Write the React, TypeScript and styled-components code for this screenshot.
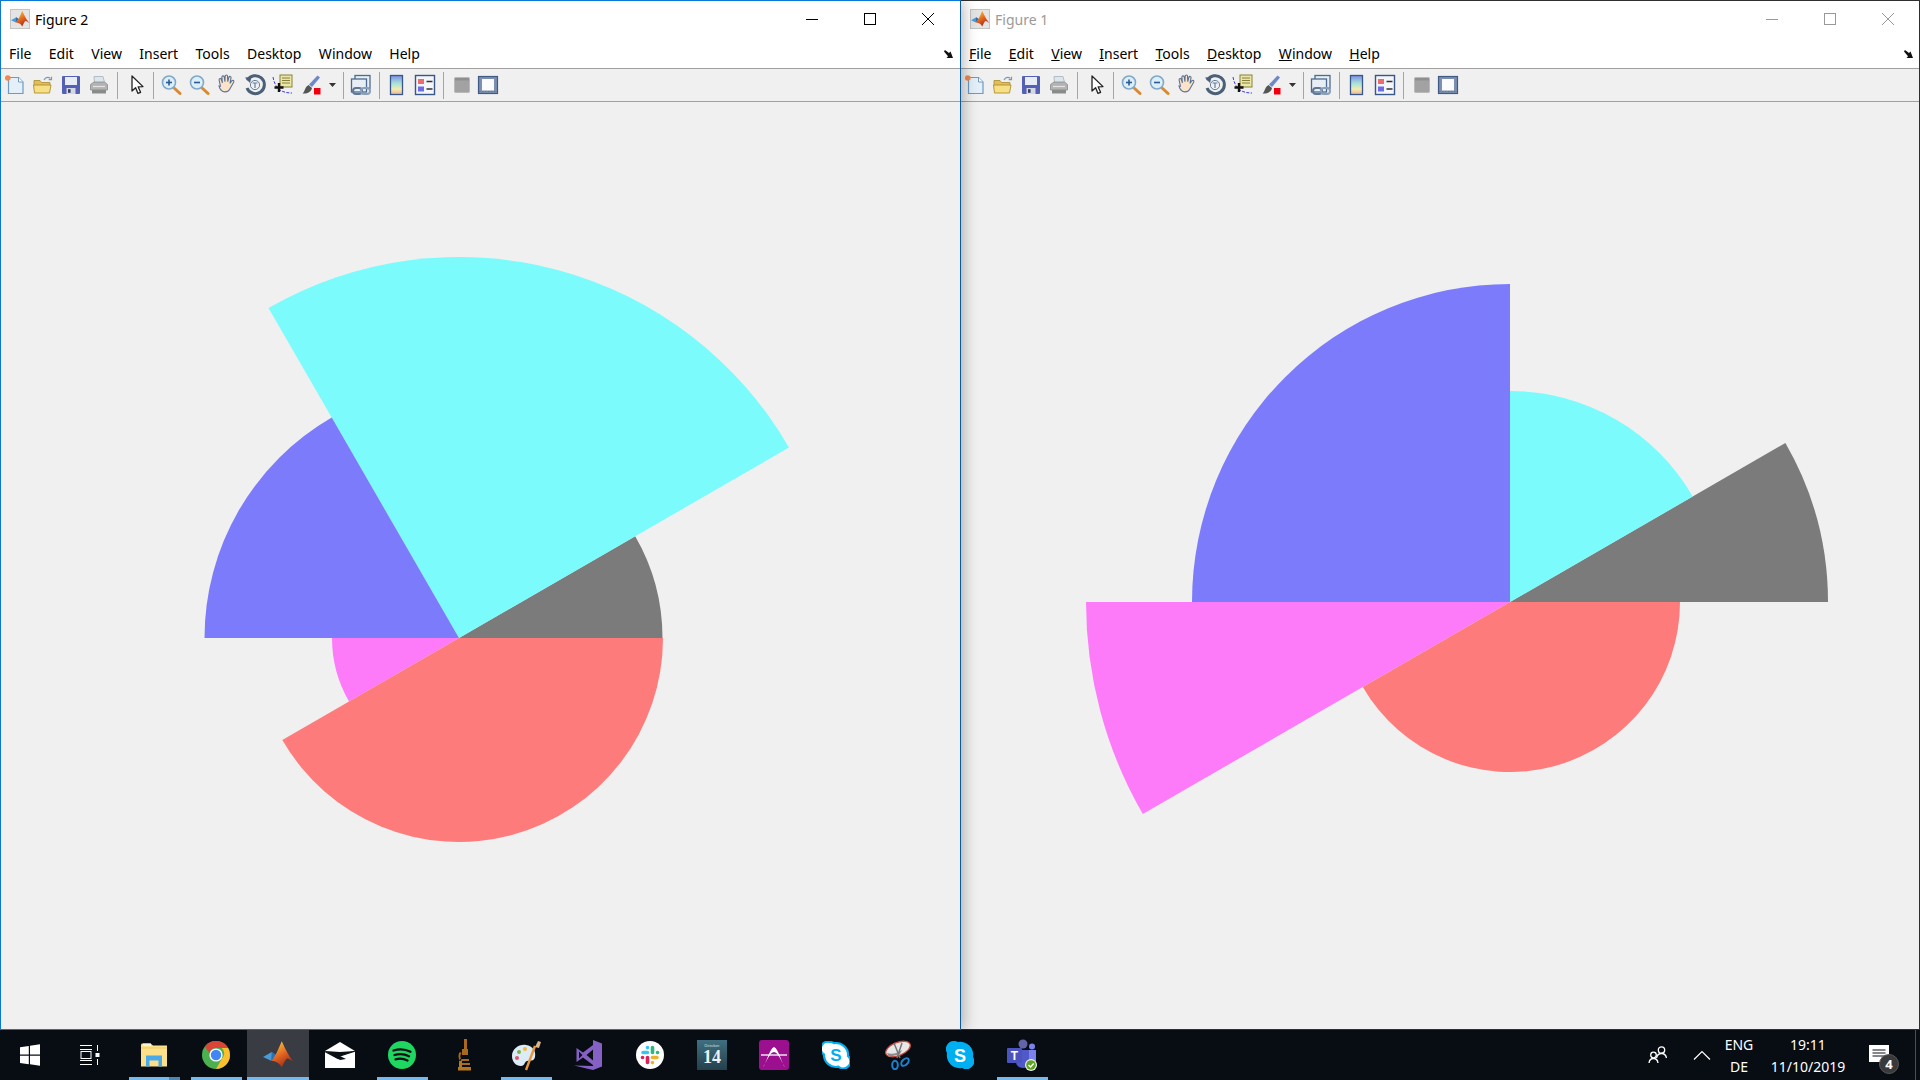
import React from "react";
import styled, { createGlobalStyle } from "styled-components";

type Wedge = { from: number; to: number; r: number; color: string };

const CYAN = "#7bfbfb";
const BLUE = "#7b7bfb";
const GRAY = "#7b7b7b";
const MAGENTA = "#fd7bf9";
const RED = "#fd7b7b";

const figure2: Wedge[] = [
  { from: 0, to: 30, r: 203.5, color: GRAY },
  { from: 30, to: 120, r: 381, color: CYAN },
  { from: 120, to: 180, r: 254.5, color: BLUE },
  { from: 180, to: 210, r: 127, color: MAGENTA },
  { from: 210, to: 360, r: 204, color: RED },
];

const figure1: Wedge[] = [
  { from: 0, to: 30, r: 318, color: GRAY },
  { from: 30, to: 90, r: 211, color: CYAN },
  { from: 90, to: 180, r: 318, color: BLUE },
  { from: 180, to: 210, r: 424, color: MAGENTA },
  { from: 210, to: 360, r: 170, color: RED },
];

const MENU = ["File", "Edit", "View", "Insert", "Tools", "Desktop", "Window", "Help"];

function wedgePath(cx: number, cy: number, w: Wedge) {
  const rad = (a: number) => (a * Math.PI) / 180;
  const x1 = cx + w.r * Math.cos(rad(w.from));
  const y1 = cy - w.r * Math.sin(rad(w.from));
  const x2 = cx + w.r * Math.cos(rad(w.to));
  const y2 = cy - w.r * Math.sin(rad(w.to));
  const large = w.to - w.from > 180 ? 1 : 0;
  return `M${cx} ${cy}L${x1} ${y1}A${w.r} ${w.r} 0 ${large} 0 ${x2} ${y2}Z`;
}

function MatlabLogo({ size }: { size: number }) {
  return (
    <svg width={size} height={size} viewBox="0 0 24 24">
      <defs>
        <linearGradient id="mlPeak" x1="0.3" y1="0" x2="0.8" y2="1">
          <stop offset="0" stopColor="#f9c23c" />
          <stop offset="0.5" stopColor="#e0611f" />
          <stop offset="1" stopColor="#8e1f16" />
        </linearGradient>
      </defs>
      <path d="M0 13.500 7 9.500l3.500 2.700L6.500 16.500z" fill="#4a9ad8" />
      <path d="M7 9.500 10.500 12.200 13.400 8 6.500 16.500z" fill="#2a6fb0" />
      <path d="M15 1c1.800 3.600 4.600 10.500 9 16-2-.9-3.400-2.400-4.600-2.200-1.200.3-2.400 3.200-4.400 7.200-1.400-3-3.600-5-8.500-5.500C9.500 14.500 12.200 7.500 15 1z" fill="url(#mlPeak)" />
    </svg>
  );
}

function NewIcon() {
  return (
    <svg width="22" height="22" viewBox="0 0 22 22">
      <path d="M4.500 3.500h10l4.500 4.500v11.500H4.500z" fill="#e3f0fa" stroke="#6f9ac2" strokeWidth="1.200" />
      <path d="M14.500 3.500V8H19" fill="#fff" stroke="#6f9ac2" />
      <circle cx="3.800" cy="4" r="2.800" fill="#ee8a4e" />
    </svg>
  );
}

function OpenIcon() {
  return (
    <svg width="22" height="22" viewBox="0 0 22 22">
      <path d="M2 6.500h6l1.500 2H18v3H2z" fill="#e2bf56" stroke="#a88a2f" strokeWidth="0.800" />
      <path d="M1.500 11h17.500l-1.500 8H2.500z" fill="#f7df87" stroke="#ae8f30" strokeWidth="0.900" />
      <path d="M12 6c1.400-2.600 4-3 6.400-1.800M19.500 2.800v2.800h-2.800" fill="none" stroke="#7b96ad" strokeWidth="1.200" />
    </svg>
  );
}

function SaveIcon() {
  return (
    <svg width="22" height="22" viewBox="0 0 22 22">
      <rect x="2" y="2" width="18" height="18" rx="1" fill="#5360b4" />
      <rect x="5" y="3" width="12" height="8" fill="#e7ecf7" />
      <rect x="6.500" y="14" width="9" height="6" fill="#d4d8e6" />
      <rect x="8" y="15.200" width="2.600" height="3.600" fill="#3a3f66" />
    </svg>
  );
}

function PrintIcon() {
  return (
    <svg width="22" height="22" viewBox="0 0 22 22">
      <path d="M6 2.500h9l1.500 6h-10z" fill="#dce6ee" stroke="#a6b0b8" strokeWidth="0.800" />
      <path d="M2.500 10.500 6 8h10.500l3 2.500v5.500h-17z" fill="#b2b4b4" stroke="#8a8c8c" strokeWidth="0.800" />
      <path d="M4 16h14v3.500H4z" fill="#8a8c8c" />
      <path d="M5 12.500h12" stroke="#e4e4e4" strokeWidth="1.200" />
    </svg>
  );
}

function ArrowIcon() {
  return (
    <svg width="22" height="22" viewBox="0 0 22 22">
      <path d="M6 2v15l3.600-3.200 2.400 5.600 2.600-1.100-2.400-5.400 4.800-.3z" fill="#fff" stroke="#222" strokeWidth="1.300" strokeLinejoin="round" />
    </svg>
  );
}

function ZoomIcon({ plus }: { plus: boolean }) {
  return (
    <svg width="22" height="22" viewBox="0 0 22 22">
      <path d="M13 13l7 6.500" stroke="#d98a2e" strokeWidth="3" strokeLinecap="round" />
      <circle cx="9" cy="8.500" r="6.500" fill="#dbeefa" stroke="#7fa9c9" strokeWidth="1.600" />
      <path d="M6 8.500h6" stroke="#2d5a93" strokeWidth="1.600" />
      {plus && <path d="M9 5.500v6" stroke="#2d5a93" strokeWidth="1.600" />}
    </svg>
  );
}

function HandIcon() {
  return (
    <svg width="24" height="24" viewBox="0 0 22 22">
      <path d="M5 12 3.800 6.500c-.3-1.600 1.600-2 2-.5l1 3-.5-5c-.2-1.700 2-1.800 2.200-.2l.6 4.200.2-5c0-1.600 2.200-1.500 2.200 0l.2 5 1-4c.4-1.500 2.300-1 2 .5l-1 5 1.600-2.200c1-1.200 2.600-.2 1.800 1.100l-3 5.300c-.8 2-2 3.600-5 3.600-3.400 0-4.600-2-5.500-5.400z" fill="#fbe3cb" stroke="#5d7390" strokeWidth="1" />
    </svg>
  );
}

function RotateIcon() {
  return (
    <svg width="22" height="22" viewBox="0 0 22 22">
      <path d="M3.400 6.500A9 9 0 1 1 3 14" fill="none" stroke="#4b5f78" strokeWidth="3" />
      <path d="M1 3.500 7.500 3 6 9z" fill="#4b5f78" />
      <circle cx="11" cy="11" r="4.600" fill="#eef2f6" stroke="#6a7f98" />
      <path d="M8.500 9h5M11 9v5" stroke="#6a7f98" strokeWidth="1.200" />
    </svg>
  );
}

function DataTipIcon() {
  return (
    <svg width="22" height="22" viewBox="0 0 22 22">
      <path d="M1 3c.8 5 3 10 7 13 3 2 7 3 12 3" fill="none" stroke="#3a3ae0" strokeWidth="1" strokeDasharray="3 1.400" />
      <rect x="8" y="1" width="12" height="12" fill="#ece7a8" stroke="#85803c" />
      <path d="M10 4h8M10 6.500h8M10 9h8" stroke="#85803c" />
      <path d="M7 9v9M2.500 13.500h9" stroke="#111" strokeWidth="2.400" />
    </svg>
  );
}

function BrushIcon() {
  return (
    <svg width="22" height="22" viewBox="0 0 22 22">
      <path d="M17.500 1.500 20 3.500 12 13l-3-2.500z" fill="#6f86c8" />
      <path d="M8.500 11 12 14c-.6 3.500-4.500 6-9.500 5.500C5 18 4.500 13 8.500 11z" fill="#555" />
      <rect x="14" y="14" width="6.500" height="6.500" fill="#f0000f" />
    </svg>
  );
}

function Caret() {
  return (
    <svg width="8" height="5" viewBox="0 0 8 5">
      <path d="M0 0h7L3.500 4z" fill="#333" />
    </svg>
  );
}

function LinkIcon() {
  return (
    <svg width="22" height="22" viewBox="0 0 22 22">
      <rect x="5" y="1.500" width="15" height="13" fill="#e7eef5" stroke="#4d6a90" strokeWidth="1.300" />
      <rect x="1.500" y="5" width="15" height="13" fill="#e7eef5" stroke="#4d6a90" strokeWidth="1.300" />
      <rect x="3" y="14" width="9" height="6" rx="3" fill="none" stroke="#5f7896" strokeWidth="2" />
      <rect x="11" y="14" width="9" height="6" rx="3" fill="none" stroke="#8aa0b8" strokeWidth="2" />
    </svg>
  );
}

function ColorbarIcon() {
  return (
    <svg width="22" height="22" viewBox="0 0 22 22">
      <defs>
        <linearGradient id="cbar" x1="0" y1="0" x2="0" y2="1">
          <stop offset="0" stopColor="#7f8ce4" />
          <stop offset="0.4" stopColor="#a4e0dc" />
          <stop offset="0.72" stopColor="#f2ecae" />
          <stop offset="1" stopColor="#f2b09c" />
        </linearGradient>
      </defs>
      <rect x="4.500" y="1.500" width="12" height="19" fill="url(#cbar)" stroke="#37568a" strokeWidth="1.300" />
    </svg>
  );
}

function LegendIcon() {
  return (
    <svg width="22" height="22" viewBox="0 0 22 22">
      <rect x="1.500" y="1.500" width="19" height="19" fill="#f4f6fa" stroke="#37568a" strokeWidth="1.400" />
      <rect x="4" y="5" width="6" height="5" fill="#ec6b6f" />
      <rect x="4" y="12.500" width="6" height="5" fill="#6c6ce8" />
      <path d="M12.500 7.500h6M12.500 15h6" stroke="#333" strokeWidth="1.300" />
    </svg>
  );
}

function GrayPanelIcon() {
  return (
    <svg width="22" height="22" viewBox="0 0 22 22">
      <rect x="3.500" y="3.500" width="15" height="15" rx="1" fill="#a2a2a2" stroke="#b9b9b9" />
      <rect x="4" y="4" width="14" height="2.500" fill="#8f8f8f" />
    </svg>
  );
}

function PlotToolsIcon() {
  return (
    <svg width="22" height="22" viewBox="0 0 22 22">
      <rect x="1.500" y="2.500" width="19" height="17" fill="#7c8fae" stroke="#3f5a86" strokeWidth="1.200" />
      <rect x="5" y="5" width="12" height="11.500" fill="#fbfbfb" />
      <path d="M2 17.500h18" stroke="#5f769a" strokeWidth="1.200" strokeDasharray="1.500 1.500" />
    </svg>
  );
}

function FigureWindow({
  title,
  active,
  wedges,
  cx,
  cy,
}: {
  title: string;
  active: boolean;
  wedges: Wedge[];
  cx: number;
  cy: number;
}) {
  return (
    <Window $active={active}>
      <TitleBar>
        <TitleIcon>
          <MatlabLogo size={18} />
        </TitleIcon>
        <TitleText $active={active}>{title}</TitleText>
        <Controls $active={active}>
          <ControlButton>
            <svg width="14" height="14" viewBox="0 0 14 14">
              <path d="M1 7.500h12" stroke="currentColor" />
            </svg>
          </ControlButton>
          <ControlButton>
            <svg width="14" height="14" viewBox="0 0 14 14">
              <rect x="1.500" y="1.500" width="11" height="11" fill="none" stroke="currentColor" />
            </svg>
          </ControlButton>
          <ControlButton>
            <svg width="14" height="14" viewBox="0 0 14 14">
              <path d="M1 1l12 12M13 1 1 13" stroke="currentColor" />
            </svg>
          </ControlButton>
        </Controls>
      </TitleBar>
      <MenuBar>
        {MENU.map((m) => (
          <MenuItem key={m}>
            <Accel $on={!active}>{m[0]}</Accel>
            {m.slice(1)}
          </MenuItem>
        ))}
        <Undock>
          <svg width="9" height="8" viewBox="0 0 9 8">
            <path d="M0 1.500 1 0l4 3 1.500-1.500L9 8H2.500L4 6.300z" fill="#111" />
          </svg>
        </Undock>
      </MenuBar>
      <Toolbar>
        <ToolButton><NewIcon /></ToolButton>
        <ToolButton><OpenIcon /></ToolButton>
        <ToolButton><SaveIcon /></ToolButton>
        <ToolButton><PrintIcon /></ToolButton>
        <Separator $before={4} $after={5} />
        <ToolButton><ArrowIcon /></ToolButton>
        <Separator $before={2} $after={3} />
        <ToolButton><ZoomIcon plus /></ToolButton>
        <ToolButton><ZoomIcon plus={false} /></ToolButton>
        <ToolButton><HandIcon /></ToolButton>
        <ToolButton><RotateIcon /></ToolButton>
        <ToolButton><DataTipIcon /></ToolButton>
        <ToolButton><BrushIcon /></ToolButton>
        <ToolButton $w={16}><Caret /></ToolButton>
        <Separator $before={2} $after={3} />
        <ToolButton><LinkIcon /></ToolButton>
        <Separator $before={4} $after={3} />
        <ToolButton><ColorbarIcon /></ToolButton>
        <ToolButton><LegendIcon /></ToolButton>
        <Separator $before={4} $after={4} />
        <ToolButton><GrayPanelIcon /></ToolButton>
        <ToolButton $w={24}><PlotToolsIcon /></ToolButton>
      </Toolbar>
      <Canvas>
        <PlotSvg>
          {wedges.map((w) => (
            <path key={w.from} d={wedgePath(cx, cy, w)} fill={w.color} />
          ))}
        </PlotSvg>
      </Canvas>
    </Window>
  );
}

function TaskIcon({ children, state }: { children: React.ReactNode; state?: "open" | "stack" | "focus" }) {
  return (
    <TaskItem $focus={state === "focus"}>
      {children}
      {state && <RunBar $focus={state === "focus"} $stack={state === "stack"} />}
    </TaskItem>
  );
}

function App() {
  return (
    <>
      <GlobalStyle />
      <Desktop>
        <Windows>
          <FigureWindow title="Figure 2" active wedges={figure2} cx={459} cy={536} />
          <FigureWindow title="Figure 1" active={false} wedges={figure1} cx={550} cy={500} />
        </Windows>
        <Taskbar>
          <StartButton>
            <svg width="20" height="22" viewBox="0 0 20 22">
              <path d="M0 3.300 8.800 2v8.500H0zM10 1.800 20 .3v10.200H10zM0 11.700h8.800v8.500L0 19zM10 11.700h10v10L10 20.300z" fill="#fff" />
            </svg>
          </StartButton>
          <TaskViewButton>
            <svg width="20" height="20" viewBox="0 0 20 20">
              <path d="M0 .5h12M0 19.500h12" stroke="#fff" />
              <path d="M0 4.500h12M0 15.500h12" stroke="#fff" />
              <rect x="1" y="6.500" width="10" height="7" fill="none" stroke="#fff" />
              <path d="M17.500 0v6M17.500 14v6" stroke="#fff" />
              <rect x="15.500" y="8" width="4" height="4" fill="#fff" />
            </svg>
          </TaskViewButton>
          <TaskIcon state="stack">
            <svg width="28" height="26" viewBox="0 0 28 26">
              <path d="M1 3c0-1 .6-1.600 1.500-1.600h8L13 3.500h14v21H1z" fill="#fde08a" />
              <rect x="3" y="1.500" width="8" height="2.500" fill="#f7f3dc" />
              <path d="M1 6h26" stroke="#eec95e" />
              <path d="M6 24.500V13.500h16v11h-3.500v-6H9.500v6z" fill="#4aa9e8" />
            </svg>
          </TaskIcon>
          <TaskIcon state="open">
            <svg width="28" height="28" viewBox="0 0 28 28">
              <circle cx="14" cy="14" r="14" fill="#4caf50" />
              <path d="M14 0a14 14 0 0 1 12.100 7H14a7 7 0 0 0-6.700 5L2.800 5.600A14 14 0 0 1 14 0z" fill="#db4437" />
              <path d="M26.100 7A14 14 0 0 1 14 28l6-10.500A7 7 0 0 0 19.800 7z" fill="#fbc02d" />
              <circle cx="14" cy="14" r="6.600" fill="#fff" />
              <circle cx="14" cy="14" r="5.200" fill="#4285f4" />
            </svg>
          </TaskIcon>
          <TaskIcon state="focus">
            <MatlabLogo size={30} />
          </TaskIcon>
          <TaskIcon>
            <svg width="30" height="26" viewBox="0 0 30 26">
              <path d="M0 9 15 0l15 9v17H0z" fill="#fff" />
              <path d="M0 9 15 18l6-1-6-3 15-5-15 1z" fill="#0a0f14" />
              <path d="M0 9.500 13 16.500 15 14 30 9" fill="none" stroke="#0a0f14" strokeWidth="1.200" />
            </svg>
          </TaskIcon>
          <TaskIcon state="open">
            <svg width="28" height="28" viewBox="0 0 28 28">
              <circle cx="14" cy="14" r="14" fill="#1ed760" />
              <path d="M5.500 9.500c6-1.800 12-1.300 17 1.300M6.500 14c5-1.400 10-1 14.500 1.300M7.500 18.300c4-1 8-.8 12 1.200" fill="none" stroke="#0a0f14" strokeWidth="2.300" strokeLinecap="round" />
            </svg>
          </TaskIcon>
          <TaskIcon>
            <svg width="16" height="32" viewBox="0 0 16 32">
              <path d="M8 0h3v11H8zM6 10h6v6H6z" fill="#a86a1a" />
              <path d="M4 13c-2 2-2 6 0 9l1.500-1c-1.500-2.500-1.500-5 0-7zM4 20h9v2H4zM6 24h8v2H6z" fill="#a86a1a" />
              <path d="M3 22h3v6H3zM2 28h13v3.500H2z" fill="#b5741e" />
            </svg>
          </TaskIcon>
          <TaskIcon state="open">
            <svg width="30" height="32" viewBox="0 0 30 32">
              <path d="M1 17c0-7 7-12 14-11 7 1 10 6 9 12-1 5-5 3-8 4-3 1-2 5-6 5-5 0-9-4-9-10z" fill="#dcecf6" />
              <circle cx="6" cy="19" r="2" fill="#e0566a" />
              <circle cx="8" cy="13" r="2" fill="#7cb342" />
              <circle cx="14" cy="10" r="2" fill="#f4b63f" />
              <path d="M15 31 24 7" stroke="#e8973e" strokeWidth="2.400" />
              <path d="M24 8l3-6 3 1-2 6z" fill="#d8b48a" />
            </svg>
          </TaskIcon>
          <TaskIcon>
            <svg width="30" height="32" viewBox="0 0 30 32">
              <path d="M20 1 29 4.500v23L20 31 1 26.500 20 27z" fill="#8661c5" />
              <path d="M20 6v20L10 18.500 3.500 23V9l6.500 4.500z" fill="#8661c5" />
              <path d="M20 10.500 13.500 16 20 21.500zM6 12.500v7l3.500-3.500z" fill="#0a0f14" />
            </svg>
          </TaskIcon>
          <TaskIcon>
            <svg width="28" height="28" viewBox="0 0 28 28">
              <circle cx="14" cy="14" r="14" fill="#fff" />
              <g fill="none" strokeWidth="3.600" strokeLinecap="round">
                <path d="M7 11.500h4.500M11.500 6.500v.1" stroke="#36c5f0" />
                <path d="M16.500 6.500v5M21.500 11.500h.1" stroke="#2eb67d" />
                <path d="M16.500 16.500h4.500M16.500 21.500v.1" stroke="#ecb22e" />
                <path d="M11.500 16.500v5M6.500 16.500h.1" stroke="#e01e5a" />
              </g>
            </svg>
          </TaskIcon>
          <TaskIcon>
            <CalendarTile>
              <CalendarStrip>October</CalendarStrip>
              <CalendarDay>14</CalendarDay>
            </CalendarTile>
          </TaskIcon>
          <TaskIcon>
            <svg width="30" height="30" viewBox="0 0 30 30">
              <rect width="30" height="30" rx="3" fill="#9c0f8f" />
              <path d="M4 27c3-2 6-18 11-20 5 2 8 18 11 20-4-6-7-15-11-15S8 21 4 27z" fill="#fff" />
              <path d="M2 15h26" stroke="#fff" strokeWidth="1.300" />
            </svg>
          </TaskIcon>
          <TaskIcon>
            <svg width="28" height="28" viewBox="0 0 28 28">
              <path d="M8 1a7 7 0 0 1 4 1.200 12 12 0 0 1 14 12.800 7 7 0 0 1-9.500 10.700A12 12 0 0 1 2 13.500 7 7 0 0 1 8 1z" fill="#fff" stroke="#00aff0" strokeWidth="2.200" />
              <text x="14" y="20" textAnchor="middle" fontFamily="Liberation Sans, sans-serif" fontSize="17" fontWeight="700" fill="#00aff0">S</text>
            </svg>
          </TaskIcon>
          <TaskIcon>
            <svg width="28" height="30" viewBox="0 0 28 30">
              <ellipse cx="14" cy="9" rx="13" ry="6.500" transform="rotate(-22 14 9)" fill="#e8e8e8" stroke="#c9483e" strokeWidth="1.300" />
              <path d="M3 13c5 2 11 0 15-3l-2 4-11 3z" fill="#8d8d8d" />
              <path d="M10 3l6 15M18 3l-5 15" stroke="#777" strokeWidth="1.500" />
              <ellipse cx="11" cy="25" rx="2.800" ry="4.200" fill="none" stroke="#1a82cf" strokeWidth="2" />
              <ellipse cx="21" cy="22" rx="2.800" ry="4.500" transform="rotate(45 21 22)" fill="none" stroke="#1a82cf" strokeWidth="2" />
            </svg>
          </TaskIcon>
          <TaskIcon>
            <svg width="28" height="28" viewBox="0 0 28 28">
              <path d="M8 0a8 8 0 0 1 4 1 13 13 0 0 1 15 15 8 8 0 0 1-11 11A13 13 0 0 1 1 12 8 8 0 0 1 8 0z" fill="#00aff0" />
              <text x="14" y="20.500" textAnchor="middle" fontFamily="Liberation Sans, sans-serif" fontSize="18" fontWeight="700" fill="#fff">S</text>
            </svg>
          </TaskIcon>
          <TaskIcon state="open">
            <svg width="32" height="32" viewBox="0 0 32 32">
              <circle cx="17" cy="5" r="4.500" fill="#6264a7" />
              <circle cx="26" cy="7.500" r="3" fill="#7b83eb" />
              <path d="M20 11h10v10c0 3-3 5-6 5s-4-2-4-4z" fill="#7b83eb" />
              <path d="M10 11h13v13c0 3-2 5-6 5s-7-3-7-6z" fill="#5059c9" />
              <rect x="1" y="9" width="15" height="15" rx="1" fill="#4b53bc" />
              <text x="8.500" y="21" textAnchor="middle" fontFamily="Liberation Sans, sans-serif" fontSize="12" fontWeight="700" fill="#fff">T</text>
              <circle cx="25" cy="26" r="6" fill="#f2f2f2" />
              <circle cx="25" cy="26" r="4.800" fill="#5da423" />
              <path d="M22.500 26l2 2 3.200-3.500" fill="none" stroke="#fff" strokeWidth="1.400" />
            </svg>
          </TaskIcon>
          <Tray>
            <TrayIcon $w={44}>
              <svg width="20" height="20" viewBox="0 0 20 20">
                <circle cx="13.500" cy="5" r="3.200" fill="none" stroke="#fff" strokeWidth="1.300" />
                <path d="M8.500 13c.6-3 2.500-4.500 5-4.500s4.400 1.500 5 4.500" fill="none" stroke="#fff" strokeWidth="1.300" />
                <circle cx="5.500" cy="10" r="2.800" fill="#0a0f14" stroke="#fff" strokeWidth="1.300" />
                <path d="M1 18c.4-3 2-4.500 4.500-4.500S9.600 15 10 18" fill="none" stroke="#fff" strokeWidth="1.300" />
              </svg>
            </TrayIcon>
            <TrayIcon $w={44}>
              <svg width="18" height="10" viewBox="0 0 18 10">
                <path d="M1 9.500 9 1.500l8 8" fill="none" stroke="#fff" strokeWidth="1.200" />
              </svg>
            </TrayIcon>
            <TrayText $w={30}>
              <span>ENG</span>
              <span>DE</span>
            </TrayText>
            <TrayText $w={86} $left={11}>
              <span>19:11</span>
              <span>11/10/2019</span>
            </TrayText>
            <Notification>
              <svg width="20" height="18" viewBox="0 0 20 18">
                <path d="M0 0h20v17H0z" fill="#fff" />
                <path d="M3.500 5h13M3.500 8h13M3.500 11h13" stroke="#0a0f14" strokeWidth="1.100" />
              </svg>
              <Badge>4</Badge>
            </Notification>
            <ShowDesktop />
          </Tray>
        </Taskbar>
      </Desktop>
    </>
  );
}

const GlobalStyle = createGlobalStyle`
  html, body {
    margin: 0;
    padding: 0;
    height: 100%;
    overflow: hidden;
    font-family: "Noto Sans", "Open Sans", sans-serif;
  }
  #root {
    height: 100%;
  }
`;

const Desktop = styled.div`
  display: flex;
  flex-direction: column;
  width: 1920px;
  height: 1080px;
`;

const Windows = styled.div`
  display: flex;
  height: 1030px;
`;

const Window = styled.section<{ $active: boolean }>`
  position: relative;
  z-index: ${(p) => (p.$active ? 1 : 0)};
  display: flex;
  flex-direction: column;
  flex: 0 0 ${(p) => (p.$active ? 961 : 960)}px;
  box-sizing: border-box;
  padding-right: ${(p) => (p.$active ? 1 : 0)}px;
  margin-right: ${(p) => (p.$active ? -1 : 0)}px;
  height: 100%;
  background: #fff;
  box-shadow: ${(p) => (p.$active ? "2px 0 14px rgba(0, 0, 0, 0.3)" : "none")};
  &::after {
    content: "";
    position: absolute;
    inset: 0;
    pointer-events: none;
    border-style: solid;
    border-color: ${(p) => (p.$active ? "#0a78d7" : "#2f2f2f")};
    border-width: ${(p) => (p.$active ? "1px" : "1px 1px 1px 0")};
    border-right-color: ${(p) => (p.$active ? "#0b5aa0" : "#2f2f2f")};
  }
`;

const TitleBar = styled.div`
  display: flex;
  align-items: center;
  height: 38px;
  padding: 0 3px 0 10px;
`;

const TitleIcon = styled.div`
  display: flex;
  align-items: center;
  justify-content: center;
  width: 20px;
  height: 20px;
  margin-right: 5px;
  background: #e4e4e4;
  border: 1px solid #c4c4c4;
  box-sizing: border-box;
`;

const TitleText = styled.span<{ $active: boolean }>`
  font-size: 14px;
  color: ${(p) => (p.$active ? "#000" : "#9a9a9a")};
`;

const Controls = styled.div<{ $active: boolean }>`
  display: flex;
  margin-left: auto;
  color: ${(p) => (p.$active ? "#000" : "#999")};
`;

const ControlButton = styled.div`
  display: flex;
  align-items: center;
  justify-content: center;
  width: 58px;
  height: 38px;
`;

const MenuBar = styled.nav`
  display: flex;
  align-items: center;
  gap: 17.400px;
  height: 31px;
  padding: 1px 7px 0 9px;
  box-sizing: border-box;
  border-bottom: 1px solid #a0a0a0;
  font-size: 14px;
  color: #000;
`;

const MenuItem = styled.span``;

const Accel = styled.span<{ $on: boolean }>`
  text-decoration: ${(p) => (p.$on ? "underline" : "none")};
`;

const Undock = styled.span`
  display: flex;
  margin-left: auto;
`;

const Toolbar = styled.div`
  display: flex;
  align-items: center;
  height: 33px;
  padding-left: 1px;
  box-sizing: border-box;
  background: #f0f0f0;
  border-bottom: 1px solid #a0a0a0;
`;

const ToolButton = styled.div<{ $w?: number }>`
  display: flex;
  align-items: center;
  justify-content: center;
  flex: 0 0 ${(p) => p.$w ?? 28}px;
  height: 24px;
`;

const Separator = styled.div<{ $before: number; $after: number }>`
  width: 1px;
  height: 27px;
  margin: 0 ${(p) => p.$after}px 0 ${(p) => p.$before}px;
  background: #a5a5a5;
`;

const Canvas = styled.div`
  flex: 1;
  min-height: 0;
  background: #f0f0f0;
`;

const PlotSvg = styled.svg`
  display: block;
  width: 100%;
  height: 100%;
`;

const Taskbar = styled.footer`
  position: relative;
  z-index: 2;
  display: flex;
  align-items: stretch;
  height: 50px;
  background: #080d13;
  color: #fff;
`;

const StartButton = styled.div`
  display: flex;
  align-items: center;
  justify-content: center;
  flex: 0 0 60px;
`;

const TaskViewButton = styled(StartButton)`
  flex: 0 0 63px;
  padding-right: 4px;
  box-sizing: border-box;
`;

const TaskItem = styled.div<{ $focus: boolean }>`
  position: relative;
  display: flex;
  align-items: center;
  justify-content: center;
  flex: 0 0 62px;
  padding-bottom: 1px;
  box-sizing: border-box;
  background: ${(p) => (p.$focus ? "#393c42" : "transparent")};
`;

const RunBar = styled.div<{ $focus: boolean; $stack: boolean }>`
  position: absolute;
  bottom: 0;
  left: ${(p) => (p.$focus ? 0 : 6)}px;
  right: ${(p) => (p.$focus ? 0 : 5)}px;
  height: 3px;
  background: ${(p) =>
    p.$stack
      ? "linear-gradient(90deg, #76b9ed 78%, #4d86b3 78%)"
      : "#76b9ed"};
`;

const CalendarTile = styled.div`
  display: flex;
  flex-direction: column;
  align-items: center;
  width: 30px;
  height: 30px;
  background: linear-gradient(180deg, #3f6f80, #24404d);
`;

const CalendarStrip = styled.span`
  margin-top: 3px;
  font-size: 4px;
  line-height: 5px;
  color: #d7e2e6;
`;

const CalendarDay = styled.span`
  font-family: "Liberation Serif", serif;
  font-size: 18px;
  line-height: 18px;
  font-weight: 700;
  color: #eef2f3;
`;

const Tray = styled.div`
  display: flex;
  align-items: stretch;
  margin-left: auto;
`;

const TrayIcon = styled.div<{ $w: number }>`
  display: flex;
  align-items: center;
  justify-content: center;
  width: ${(p) => p.$w}px;
`;

const TrayText = styled.div<{ $w: number; $left?: number }>`
  display: flex;
  flex-direction: column;
  align-items: center;
  justify-content: center;
  gap: 3px;
  width: ${(p) => p.$w}px;
  margin-left: ${(p) => p.$left ?? 0}px;
  font-size: 14px;
  line-height: 19px;
`;

const Notification = styled.div`
  position: relative;
  display: flex;
  align-items: flex-start;
  width: 64px;
  padding: 15px 0 0 18px;
  box-sizing: border-box;
`;

const Badge = styled.span`
  position: absolute;
  left: 28px;
  top: 24px;
  display: flex;
  align-items: center;
  justify-content: center;
  width: 20px;
  height: 20px;
  border-radius: 50%;
  background: #3a3a3a;
  border: 1px solid #555;
  box-sizing: border-box;
  font-size: 13px;
  font-weight: 700;
`;

const ShowDesktop = styled.div`
  width: 4px;
  border-left: 1px solid #4a4f55;
`;

export default App;
